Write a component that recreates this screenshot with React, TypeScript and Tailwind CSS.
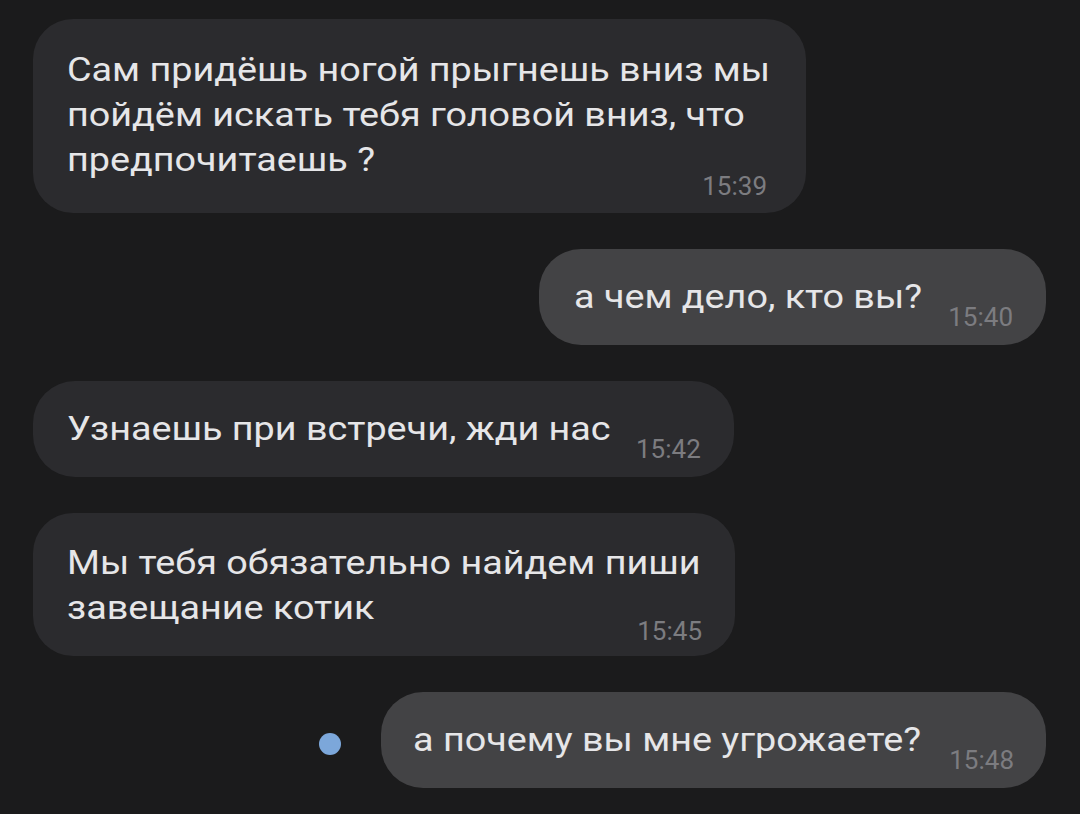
import React from 'react'

interface Message {
  lines: string[]
  time: string
  textW: string
  pad: string
  gap?: string
  timeMt?: string
  timeMr?: string
  out?: boolean
  unread?: boolean
}

const messages: Message[] = [
  {
    lines: ['Сам придёшь ногой прыгнешь вниз мы', 'пойдём искать тебя головой вниз, что', 'предпочитаешь ?'],
    time: '15:39',
    textW: 'w-[710px]',
    pad: 'pl-[34px] pr-[29px] pt-[28px] pb-[15px]',
    timeMt: '-mt-[8px]',
    timeMr: 'mr-[10px]',
  },
  {
    lines: ['а чем дело, кто вы?'],
    time: '15:40',
    textW: 'w-[345px]',
    pad: 'pl-[35px] pr-[33px] pt-[25px] pb-[26px]',
    gap: 'ml-[29px]',
    out: true,
  },
  {
    lines: ['Узнаешь при встречи, жди нас'],
    time: '15:42',
    textW: 'w-[545px]',
    pad: 'pl-[34px] pr-[33px] pt-[25px] pb-[26px]',
    gap: 'ml-[24px]',
  },
  {
    lines: ['Мы тебя обязательно найдем пиши', 'завещание котик'],
    time: '15:45',
    textW: 'w-[635px]',
    pad: 'pl-[34px] pr-[33px] pt-[27px] pb-[13px]',
    timeMt: '-mt-[11px]',
    timeMr: 'mr-0',
  },
  {
    lines: ['а почему вы мне угрожаете?'],
    time: '15:48',
    textW: 'w-[510px]',
    pad: 'pl-[32px] pr-[32px] pt-[25px] pb-[26px]',
    gap: 'ml-[26px]',
    out: true,
    unread: true,
  },
]

function Time({ value }: { value: string }) {
  return <span className="block text-[26px] leading-[24px] text-[#7c7c80] whitespace-nowrap">{value}</span>
}

function Line({ text }: { text: string }) {
  return (
    <div className="whitespace-nowrap">
      <span className="inline-block origin-left scale-x-[1.11]">{text}</span>
    </div>
  )
}

function Bubble({ msg }: { msg: Message }) {
  const bg = msg.out ? 'bg-[#434345]' : 'bg-[#2b2b2e]'
  const multiline = msg.lines.length > 1

  if (multiline) {
    return (
      <div className={`${bg} rounded-[40px] ${msg.pad} flex flex-col`}>
        <div className={`${msg.textW} text-[34px] leading-[45px] text-[#e6e6e8]`}>
          {msg.lines.map((l, i) => (
            <Line key={i} text={l} />
          ))}
        </div>
        <div className={`self-end ${msg.timeMt} ${msg.timeMr}`}>
          <Time value={msg.time} />
        </div>
      </div>
    )
  }

  return (
    <div className={`${bg} rounded-[42px] ${msg.pad} flex items-end`}>
      <div className={`${msg.textW} text-[34px] leading-[45px] text-[#e6e6e8]`}>
        <Line text={msg.lines[0]} />
      </div>
      <div className={`${msg.gap} -mb-[10px]`}>
        <Time value={msg.time} />
      </div>
    </div>
  )
}

export default function App() {
  return (
    <div
      className="w-[1080px] h-[814px] bg-[#1b1b1c] overflow-hidden pt-[19px] pl-[33px] pr-[34px] flex flex-col gap-[36px]"
      style={{ fontFamily: 'Roboto, "Noto Sans", sans-serif' }}
    >
      {messages.map((msg, i) =>
        msg.out ? (
          <div key={i} className="self-end flex items-center">
            {msg.unread && <div className="w-[22px] h-[22px] rounded-full bg-[#7ca7da] mr-[40px] mt-[8px]" />}
            <Bubble msg={msg} />
          </div>
        ) : (
          <div key={i} className="self-start">
            <Bubble msg={msg} />
          </div>
        ),
      )}
    </div>
  )
}
